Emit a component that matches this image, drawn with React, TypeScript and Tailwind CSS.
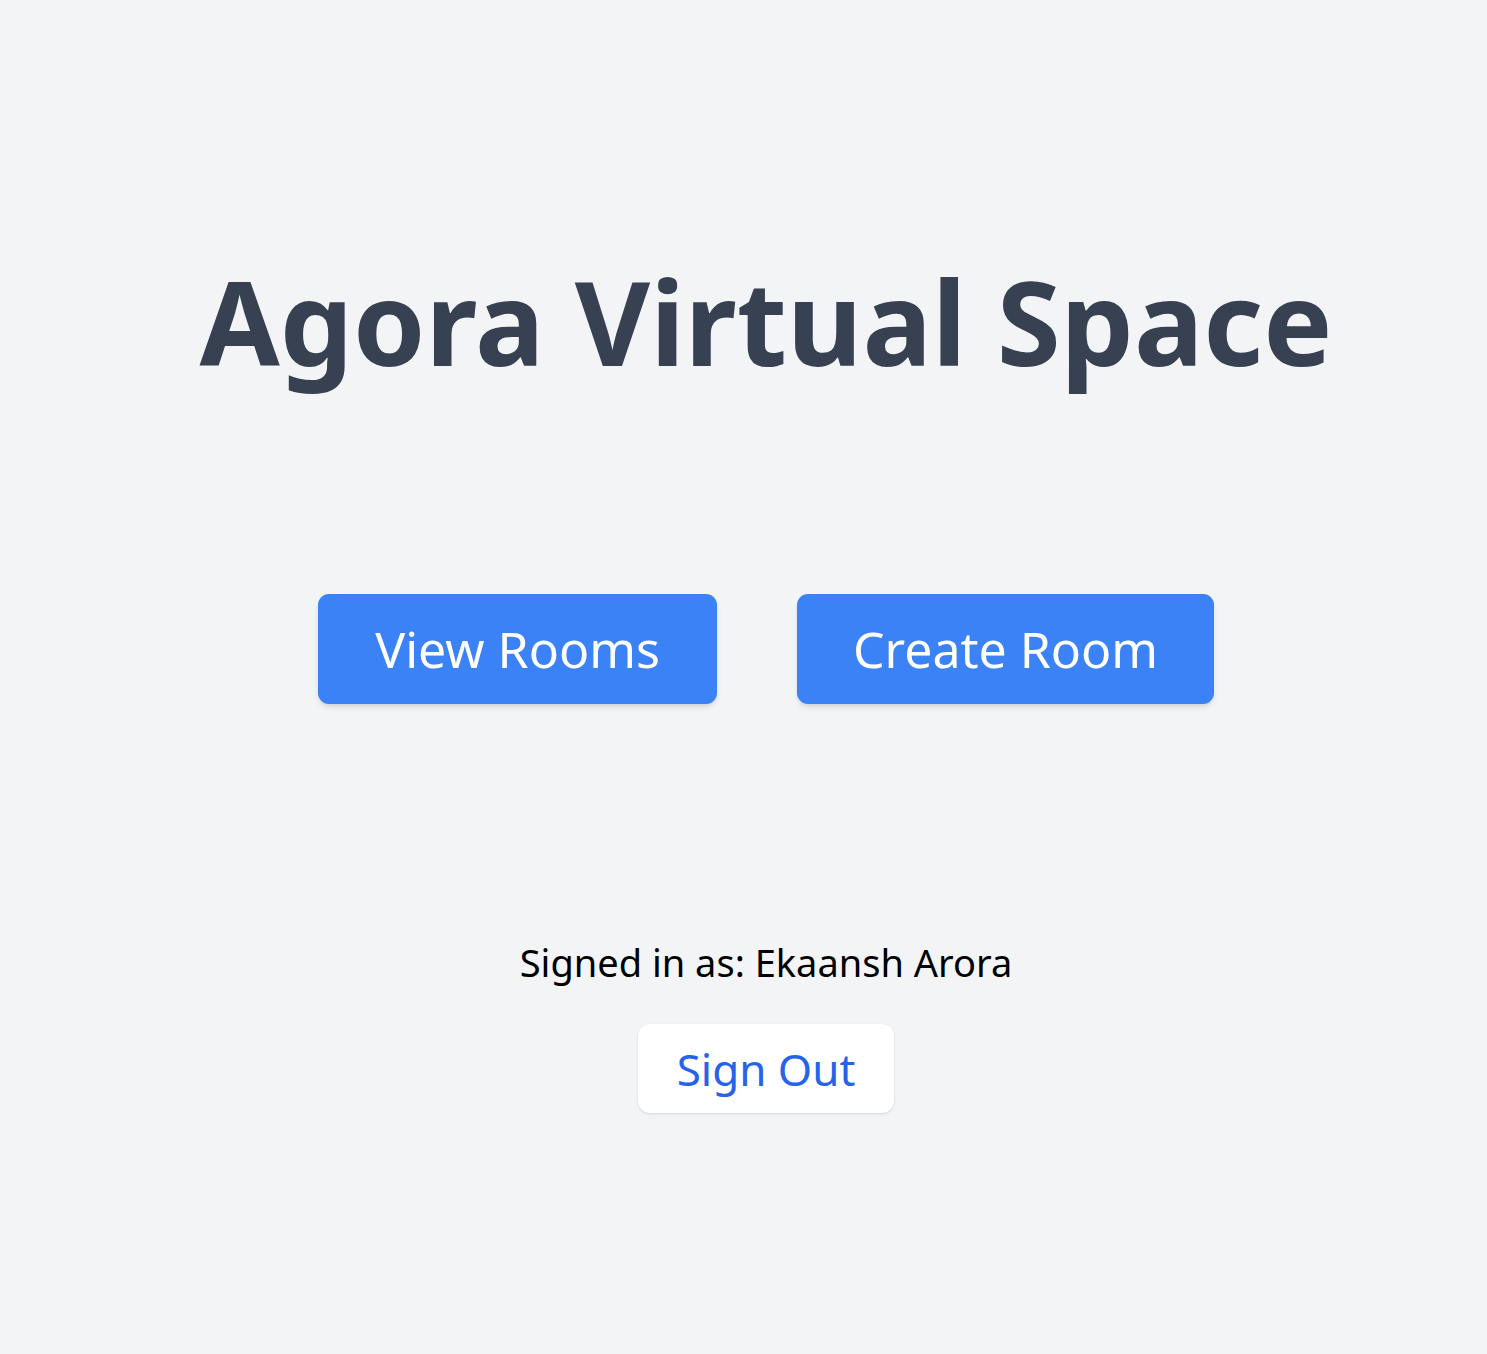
import React from "react";

export default function App() {
  return (
    <div className="min-h-screen w-full bg-[#f3f4f6] pl-[45px] font-['Noto_Sans',sans-serif]">
      <div className="flex flex-col items-center pt-[263px]">
        <h1 className="text-[116px] leading-none font-bold text-[#374151]">Agora Virtual Space</h1>
        <div className="mt-[215px] flex gap-[80px]">
          <button className="h-[110px] w-[399px] rounded-[11px] bg-[#3b82f6] text-[50px] text-white shadow-md">View Rooms</button>
          <button className="h-[110px] w-[417px] rounded-[11px] bg-[#3b82f6] text-[50px] text-white shadow-md">Create Room</button>
        </div>
        <p className="mt-[239px] text-[38px] leading-none text-black">Signed in as: Ekaansh Arora</p>
        <button className="mt-[43px] h-[89px] w-[256px] rounded-[12px] bg-white text-[44px] text-[#2563eb] shadow-sm">Sign Out</button>
      </div>
    </div>
  );
}
